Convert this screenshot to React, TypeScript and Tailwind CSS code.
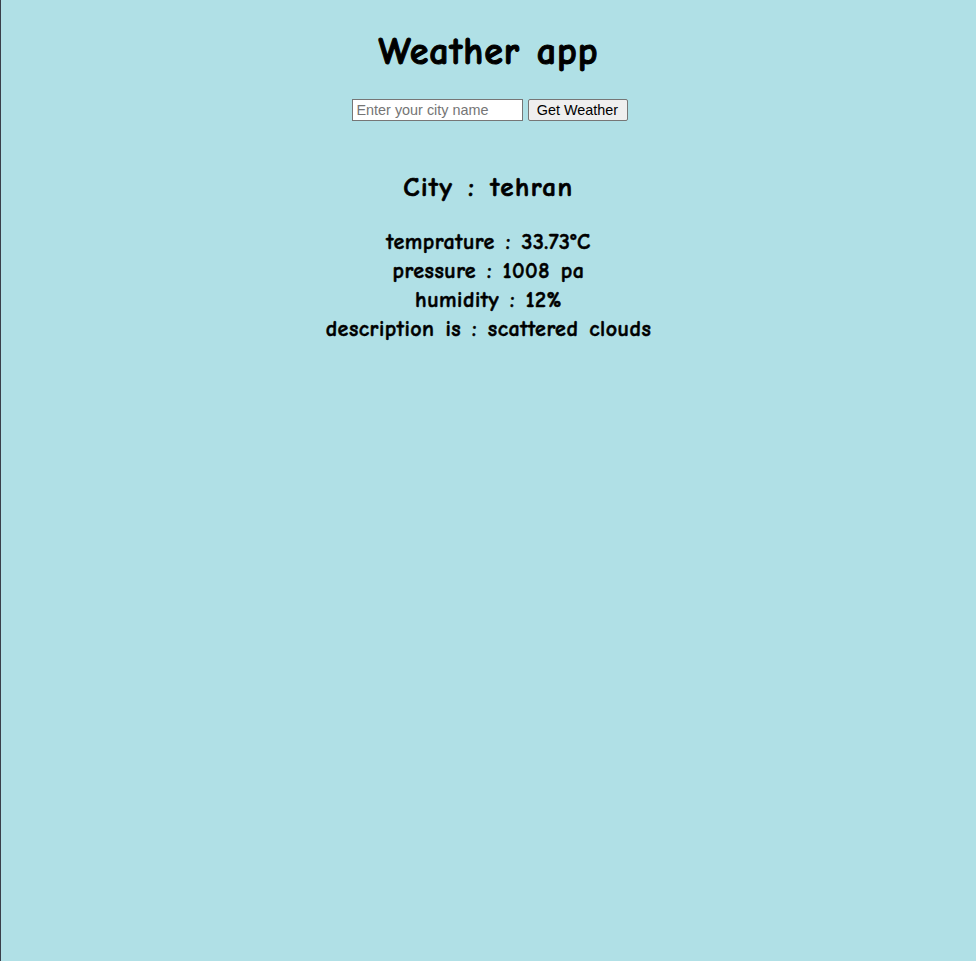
export default function App() {
  const comic = { fontFamily: '"Comic Sans MS", "Comic Neue", "Comic Sans", cursive' };
  return (
    <div className="min-h-[961px] bg-[#b0e0e6] border-l border-[#3a3f4a] flex flex-col items-center" style={comic}>
      <h1 className="mt-[27px] h-[50px] flex items-center text-[38px] font-bold text-black leading-none tracking-[1px] [word-spacing:2px] [-webkit-text-stroke:1px_black]">
        Weather app
      </h1>
      <div className="mt-[22px] ml-[2px] flex items-center gap-[5px]" style={{ fontFamily: '"Liberation Sans", Arial, sans-serif' }}>
        <input
          type="text"
          placeholder="Enter your city name"
          className="w-[171px] h-[22px] border border-[#767676] bg-white px-[4px] text-[14.4px] text-black placeholder:text-[#757575] outline-none"
        />
        <button className="w-[100px] h-[22px] border border-[#767676] bg-[#efefef] rounded-[2px] text-[14.4px] text-black">
          Get Weather
        </button>
      </div>
      <h2 className="mt-[49px] h-[34px] flex items-center text-[27px] font-bold text-black leading-none tracking-[1.5px] [word-spacing:4px] [-webkit-text-stroke:0.7px_black]">
        City : tehran
      </h2>
      <div className="mt-[24px] flex flex-col items-center text-[22px] font-bold text-black leading-[29px] tracking-[0.5px] [word-spacing:2.5px] [-webkit-text-stroke:0.5px_black]">
        <span>temprature : 33.73°C</span>
        <span>pressure : 1008 pa</span>
        <span>humidity : 12%</span>
        <span>description is : scattered clouds</span>
      </div>
    </div>
  );
}
